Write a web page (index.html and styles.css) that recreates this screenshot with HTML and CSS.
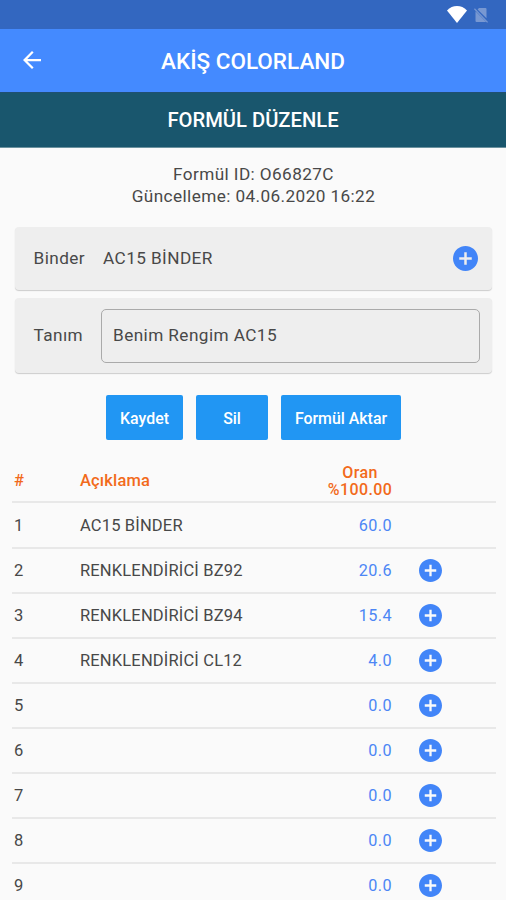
FILE: index.html
```html
<!DOCTYPE html>
<html lang="tr">
<head>
<meta charset="utf-8">
<title>Formül Düzenle</title>
<link rel="stylesheet" href="styles.css">
</head>
<body>
<svg class="defs" width="0" height="0" aria-hidden="true">
  <symbol id="add" viewBox="2 2 20 20"><path fill="currentColor" d="M12 2C6.48 2 2 6.48 2 12s4.480 10 10 10 10-4.480 10-10S17.520 2 12 2zm5 11h-4v4h-2v-4H7v-2h4V7h2v4h4v2z"/></symbol>
</svg>
<div class="status">
  <svg class="wifi" viewBox="0 0 20 17"><path fill="#fff" d="M10 17 0 4.400Q4.400 0 10 0t10 4.400z"/></svg>
  <svg class="nosim" viewBox="0 0 14 16"><path fill="#7898d2" d="M5 1h6.500q1 0 1 1v9.300L3.600 2.400zM1.500 4.300 12 14.800q-.2.200-.5.200h-9q-1 0-1-1z"/><path stroke="#7898d2" stroke-width="1.300" d="M.4 1.800 13.600 15.400"/></svg>
</div>
<header class="appbar">
  <svg class="back" viewBox="4 4 16 16"><path fill="#fff" d="M20 11H7.830l5.590-5.590L12 4l-8 8 8 8 1.410-1.410L7.830 13H20v-2z"/></svg>
  <h1>AKİŞ COLORLAND</h1>
</header>
<h2 class="subtitle">FORMÜL DÜZENLE</h2>
<main>
  <div class="info"><p>Formül ID: O66827C</p><p>Güncelleme: 04.06.2020 16:22</p></div>
  <section class="card binder">
    <span class="label">Binder</span><span class="value">AC15 BİNDER</span>
    <svg class="plus big"><use href="#add"/></svg>
  </section>
  <section class="card desc">
    <span class="label">Tanım</span><div class="field">Benim Rengim AC15</div>
  </section>
  <div class="actions">
    <button class="b1">Kaydet</button><button class="b2">Sil</button><button class="b3">Formül Aktar</button>
  </div>
  <div class="table">
    <div class="row head"><span>#</span><span>Açıklama</span><div class="ratio"><div>Oran</div><div>%100.00</div></div></div>
    <div class="row"><span>1</span><span>AC15 BİNDER</span><span class="num">60.0</span></div>
    <div class="row"><span>2</span><span>RENKLENDİRİCİ BZ92</span><span class="num">20.6</span><svg class="plus"><use href="#add"/></svg></div>
    <div class="row"><span>3</span><span>RENKLENDİRİCİ BZ94</span><span class="num">15.4</span><svg class="plus"><use href="#add"/></svg></div>
    <div class="row"><span>4</span><span>RENKLENDİRİCİ CL12</span><span class="num">4.0</span><svg class="plus"><use href="#add"/></svg></div>
    <div class="row"><span>5</span><span></span><span class="num">0.0</span><svg class="plus"><use href="#add"/></svg></div>
    <div class="row"><span>6</span><span></span><span class="num">0.0</span><svg class="plus"><use href="#add"/></svg></div>
    <div class="row"><span>7</span><span></span><span class="num">0.0</span><svg class="plus"><use href="#add"/></svg></div>
    <div class="row"><span>8</span><span></span><span class="num">0.0</span><svg class="plus"><use href="#add"/></svg></div>
    <div class="row"><span>9</span><span></span><span class="num">0.0</span><svg class="plus"><use href="#add"/></svg></div>
  </div>
</main>
</body>
</html>
```
FILE: styles.css
```css
* { box-sizing: border-box; }
html, body { height: 900px; overflow: hidden; }
body { margin: 0; background: #fafafa; color: #484848; font-family: Roboto, sans-serif; font-size: 16.5px; }
h1, h2, p { margin: 0; }
.defs { display: block; position: absolute; }
.status { height: 29px; background: #3367c0; display: flex; justify-content: flex-end; align-items: flex-start; padding: 6px 18px 0 0; gap: 7px; }
.wifi { width: 20px; height: 17px; }
.nosim { width: 14px; height: 16px; margin-top: 1px; }
.appbar { height: 63px; background: #448aff; display: grid; grid-template-columns: 41px 1fr 41px; align-items: center; }
.back { width: 18px; height: 18px; margin-left: 23px; margin-top: -1px; }
h1 { color: #fff; font-size: 22.500px; font-weight: 500; line-height: 30px; text-align: center; }
.subtitle { height: 56px; background: #19566d; border-top: 1px solid #205073; border-bottom: 1px solid #6b929f; color: #fff; font-size: 20.2px; font-weight: 500; line-height: 54px; text-align: center; }
.info { height: 78px; padding-top: 16px; text-align: center; font-size: 17.2px; line-height: 21.500px; letter-spacing: .4px; }
.info p { padding-left: 1px; }
.card { margin: 0 14px 0 15px; background: #eee; border-radius: 4px; box-shadow: 0 1px 1px #ccc; display: flex; align-items: center; padding-left: 18px; letter-spacing: .42px; font-size: 17.2px; }
.label { width: 70px; padding-left: .5px; }
.binder { height: 63px; margin-top: 1px; }
.binder span { margin-top: -2px; }
.desc { height: 75px; margin-top: 8px; }
.desc .label { width: 68px; margin-top: -2px; }
.field { width: 379px; height: 54px; border: 1px solid #aaa; border-radius: 5px; padding-left: 11px; line-height: 51px; }
.plus { display: block; width: 23px; height: 23px; color: #4285f8; }
.plus.big { width: 25px; height: 25px; margin-left: auto; margin-right: 14px; }
.actions { display: flex; justify-content: center; gap: 13px; margin: 22px 0 0 1px; }
button { height: 45px; border: 0; padding: 2px 0 0; border-radius: 2px; background: #2196f3; color: #fff; font: 500 15.9px Roboto, sans-serif; }
.b1 { width: 77px; } .b2 { width: 72px; } .b3 { width: 120px; }
.table { margin: 22px 10px 0 12px; }
.row { height: 45px; display: grid; grid-template-columns: 66px 246px 68px 1fr; align-items: center; padding: 0 0 0 2px; border-bottom: 2px solid #e8e8e8; letter-spacing: .16px; }
.row .num { color: #4c86f5; text-align: right; padding-right: 2px; font-size: 16.200px; letter-spacing: .4px; }
.row .plus { margin-left: 25px; }
.row.head { height: 41px; color: #f26a1b; font-weight: 500; padding-bottom: 2px; }
.row.head + .row { height: 46px; }
.ratio { text-align: center; font-size: 16px; line-height: 17px; letter-spacing: .4px; }
.ratio div { height: 17px; }
```
